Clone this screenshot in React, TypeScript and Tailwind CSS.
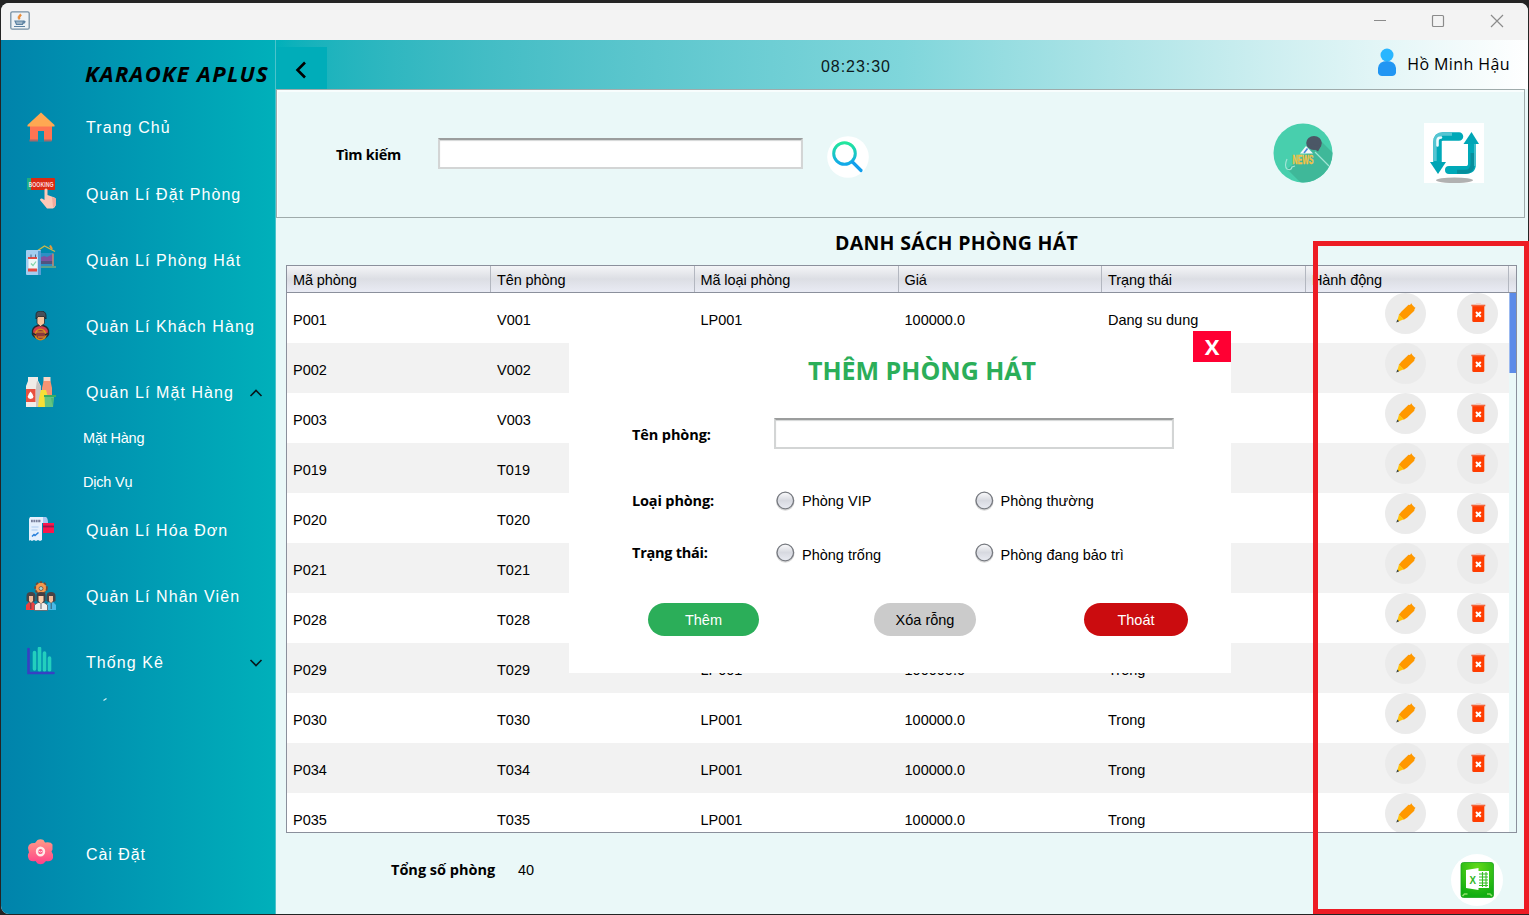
import React from "react";

const ARIAL = "font-['Liberation_Sans',Arial,sans-serif]";
const HUMAN = "font-['Open_Sans','Noto_Sans',sans-serif]";

function HomeIcon() {
  return (
    <svg width="30" height="30" viewBox="0 0 30 30">
      <path d="M4 13.500h22v15H4z" fill="#ff7452" />
      <path d="M3.500 27.500h22V29.500h-22z" fill="#a5696b" />
      <path d="M12 19h6v11h-6z" fill="#0593b3" />
      <path d="M15 0.500 28.500 13v1.500h-27V13z" fill="#ffa852" />
    </svg>
  );
}

function BookingIcon() {
  return (
    <svg width="30" height="30" viewBox="0 0 30 30" className="overflow-visible">
      <rect x="1" y="-1" width="28" height="12" rx="1" fill="#d92b13" />
      <rect x="1" y="-1" width="4" height="12" fill="#1fae83" />
      <text x="2.500" y="7.500" fontSize="6.500" fontWeight="700" fill="#fbd9de" textLength="25" lengthAdjust="spacingAndGlyphs" fontFamily="Liberation Sans">BOOKING</text>
      <path d="M18.500 10.500q1.500-2 3 0V16l7 2.500q1.500.5 1.500 2.500l-1 7-2 1.500h-6L14 21q0-2 2-1.500l2.500 1.500z" fill="#fdc9b8" />
      <path d="M26 18l4 1.500v7l-3 2z" fill="#f2ab9d" />
    </svg>
  );
}

function KaraokeRoomIcon() {
  return (
    <svg width="30" height="30" viewBox="0 0 30 30">
      <path d="M11 6 18.500 1 29 6.500" stroke="#c9b94a" strokeWidth="1.400" fill="none" />
      <path d="M24 0.500l2 3.500" stroke="#e89a3a" strokeWidth="2" />
      <path d="M13 8h14v14H13z" fill="#2d8fc4" />
      <path d="M13 13l5-2 3 1 6-3v10H13z" fill="#7e53a0" />
      <path d="M13 16h14v3H13z" fill="#51537f" />
      <path d="M27 8.500v13" stroke="#c98a71" strokeWidth="1.500" />
      <path d="M13 22h17" stroke="#5da28a" strokeWidth="2" />
      <rect x="0" y="5" width="15" height="25" rx="1" fill="#a3cdf0" />
      <path d="M12 6h3v24h-3z" fill="#589ed5" />
      <path d="M2.500 12h9v12h-9z" fill="#eef7f8" />
      <path d="M2 12h9v2H2zM2 23.500h9v3H2z" fill="#e54a42" />
      <path d="M5 9.500v3M9.500 9.500v3" stroke="#4c6686" strokeWidth="1" />
      <path d="M5 18.500l2 2 3-4" stroke="#7ed3a9" strokeWidth="1.200" fill="none" />
    </svg>
  );
}

function CustomerIcon() {
  return (
    <svg width="30" height="30" viewBox="0 0 30 30">
      <path d="M6.500 19.500q1-4.500 8-5.500 7 1 8 5.500v4q-3 4-8 5-5-1-8-5z" fill="#d13c4b" stroke="#222b31" strokeWidth="1.300" />
      <path d="M11 4h7.500v8.500l-4 3-3.500-3z" fill="#f5c49d" stroke="#222b31" strokeWidth=".8" />
      <path d="M10 8V4q0-4 4.700-4T20 4v4l-2-2.500h-6z" fill="#47505a" stroke="#1c252b" strokeWidth=".8" />
      <circle cx="14.500" cy="23.500" r="5.300" fill="#8c3a3c" stroke="#d38c1c" strokeWidth="1.600" />
      <path d="M10 21h9M12 26h6" stroke="#e89a2b" strokeWidth="1.200" />
      <path d="M6 22l4 2M23 22l-4 2" stroke="#222b31" strokeWidth="1.500" />
    </svg>
  );
}

function GoodsIcon() {
  return (
    <svg width="30" height="30" viewBox="0 0 30 30">
      <path d="M2 0h10v3.500l3 6V30H0V9l2-5z" fill="#f0ece8" />
      <path d="M11 3.500l4 6V30h-5V10z" fill="#c9c4c2" />
      <path d="M0 12h9.500v13H0z" fill="#e8503f" />
      <path d="M4.500 14.500q6 6.500 0 7.500-5.500-1 0-7.500z" fill="#fff" />
      <path d="M17.500 0h7v4.500h-7z" fill="#f9d7c6" />
      <path d="M17.500 4h7l1.500 7v9H16v-9z" fill="#f49472" />
      <path d="M15 13h5l2 7-1 10h-9l1-9z" fill="#f6e036" />
      <path d="M18.500 20H28l-1 10h-8z" fill="#65c480" />
      <path d="M18 18h12v2H18z" fill="#38ad62" />
      <path d="M25 21h2.500l-1 8z" fill="#4bb876" />
    </svg>
  );
}

function BillIcon() {
  return (
    <svg width="30" height="30" viewBox="0 0 30 30">
      <path d="M4 2h15q2 1 2 6h-5v17l-2 1-2-1-2 1-2-1-2 1-2-1-1 1V4z" fill="#e4effd" />
      <path d="M17 2h3q2 1 2 6h-5z" fill="#a8c8f2" />
      <path d="M5 6h10" stroke="#787f9b" strokeWidth="2.500" strokeDasharray="1.800 .6" />
      <path d="M5.500 12h7M5.500 15h6" stroke="#bdd7f5" strokeWidth="1.600" />
      <path d="M6 21.500l2-2 1 1 3.500-3" stroke="#277fdc" strokeWidth="1.500" fill="none" />
      <rect x="17" y="8" width="11" height="10" fill="#fb174b" />
      <path d="M17 11.500h11" stroke="#94194c" strokeWidth="1.800" />
    </svg>
  );
}

function StaffIcon() {
  return (
    <svg width="30" height="30" viewBox="0 0 30 30">
      <circle cx="15" cy="7" r="5.500" fill="#ef9143" stroke="#704c39" strokeWidth="2.500" strokeDasharray="2.500 1.500" />
      <circle cx="15" cy="7" r="5" fill="#f6994c" />
      <circle cx="15" cy="7.500" r="2" fill="#a9d8d2" stroke="#694e47" strokeWidth=".8" />
      <path d="M0 29v-5l3-3h4l3 3v5z" fill="#ed4040" />
      <path d="M20 29v-5l3-3h4l3 3v5z" fill="#4bb9e6" />
      <path d="M.5 20v-5q0-4 4.500-4t4.500 4v5l-4.500 2zM20.500 20v-5q0-4 4.500-4t4.500 4v5l-4.500 2z" fill="#484447" />
      <path d="M3 15h4v5l-2 2-2-2zM23 15h4v5l-2 2-2-2z" fill="#f5bd99" />
      <path d="M8.500 29.500V24l3.500-2.500h6l3.500 2.500v5.500z" fill="#f2efed" stroke="#5c5c61" strokeWidth=".8" />
      <path d="M10.500 14q0-3 4.500-3t4.500 3v6l-4.500 3-4.500-3z" fill="#453f43" />
      <path d="M12.500 15h5v5L15 23l-2.500-3z" fill="#ffd0ab" />
      <path d="M15 23v5M4.800 22v6M25.200 22v6" stroke="#37424e" strokeWidth=".8" />
    </svg>
  );
}

function StatsIcon() {
  return (
    <svg width="30" height="30" viewBox="0 0 30 30">
      <path d="M8.500 5.500V22M13.500 1.500V23M18.500 6v17M23.500 11v12" stroke="#23cfbd" strokeWidth="3.600" strokeLinecap="round" />
      <path d="M2.500 2v24h25" stroke="#3740c3" strokeWidth="2.600" fill="none" strokeLinecap="round" />
    </svg>
  );
}

function SettingsIcon() {
  return (
    <svg width="30" height="30" viewBox="0 0 30 30">
      <defs>
        <linearGradient id="gear" x1="0" y1="0" x2="0" y2="1">
          <stop offset="0" stopColor="#ff9c86" />
          <stop offset="1" stopColor="#ff4189" />
        </linearGradient>
      </defs>
      <path d="M11.500 1q3-1.500 6 0l1.500 2.500q6-1 7.500 2v5l-1 2 1.500 3v3.500q-1.500 4-7 3L17.500 24.500q-3 1.500-6 0L9.500 22q-6 1-7-2.500-1.500-3.500.5-6L2 9q.5-5.500 7-5z" fill="url(#gear)" />
      <ellipse cx="14.500" cy="12.500" rx="3.500" ry="3.800" fill="#ff5a86" stroke="#ffe9e8" strokeWidth="2.400" />
      <path d="M12.500 12q2 2 4 0" stroke="#ffdadd" strokeWidth="1" fill="none" />
    </svg>
  );
}

function Chevron({ up }: { up?: boolean }) {
  return (
    <svg width="14" height="8" viewBox="0 0 14 8" className="ml-auto mr-[12.5px] mt-[2px]">
      <path d={up ? "M1.500 7 7 1.500 12.500 7" : "M1.500 1 7 6.500 12.500 1"} fill="none" stroke="#07181b" strokeWidth="1.600" />
    </svg>
  );
}

function NavItem({ icon, label, chevron, tracking = "tracking-[1.08px]" }: { icon: React.ReactNode; label: string; chevron?: "up" | "down"; tracking?: string }) {
  return (
    <div className="flex h-[66px] shrink-0 items-center pl-[25px] text-white">
      {icon}
      <span className={`ml-[30px] whitespace-nowrap pt-[2px] text-[16px] ${tracking}`}>{label}</span>
      {chevron && <Chevron up={chevron === "up"} />}
    </div>
  );
}

function Sidebar() {
  return (
    <aside className="flex w-[275px] shrink-0 flex-col border-r border-[#4cc3cb] bg-linear-to-r from-[#0083ab] to-[#00b0ba]">
      <h1 className={`${HUMAN} mt-[17px] flex h-8 shrink-0 items-center whitespace-nowrap pl-[84px] text-[22px] font-bold italic tracking-[1.3px] text-black`}>KARAOKE APLUS</h1>
      <nav className="flex flex-col pt-[5px]">
        <NavItem icon={<HomeIcon />} label="Trang Chủ" />
        <div className="flex flex-col pt-px">
          <NavItem icon={<BookingIcon />} label="Quản Lí Đặt Phòng" />
          <NavItem icon={<KaraokeRoomIcon />} label="Quản Lí Phòng Hát" />
          <NavItem icon={<CustomerIcon />} label="Quản Lí Khách Hàng" />
          <NavItem icon={<GoodsIcon />} label="Quản Lí Mặt Hàng" chevron="up" />
        </div>
        <div className="flex h-[72px] flex-col gap-[18px] pl-[82px] text-[14.5px] tracking-[-0.2px] text-white">
          <span className="flex h-[26px] items-center pt-px">Mặt Hàng</span>
          <span className="flex h-[26px] items-center pt-px">Dịch Vụ</span>
        </div>
        <NavItem icon={<BillIcon />} label="Quản Lí Hóa Đơn" />
        <NavItem icon={<StaffIcon />} label="Quản Lí Nhân Viên" />
        <NavItem icon={<StatsIcon />} label="Thống Kê" chevron="down" />
      </nav>
      <svg width="4" height="3" viewBox="0 0 4 3" className="ml-[102px] mt-[3px] shrink-0">
        <path d="M.5 2.500 3.500.5" stroke="#d5f0f4" strokeWidth="1.200" />
      </svg>
      <div className="mt-auto mb-[27px]">
        <NavItem icon={<SettingsIcon />} label="Cài Đặt" tracking="tracking-[0.95px]" />
      </div>
    </aside>
  );
}

function TitleBar() {
  return (
    <div className="flex h-[37px] shrink-0 items-center bg-[#f3f3f3] pl-[9px]">
      <svg width="20" height="19" viewBox="0 0 20 19" className="-mt-[3px]">
        <rect x=".8" y=".8" width="18.400" height="17.400" rx="1.500" fill="#eef2f5" stroke="#7690a4" strokeWidth="1.300" />
        <path d="M10.500 3q-4 3-1.500 5.500Q11 7 9.500 6q3-1 1-3z" fill="#e98a35" stroke="#e98a35" strokeWidth=".8" />
        <path d="M5 10h8.500l-1 3.500H6.500zM13.500 10.500q3-.5 0 2M4 15.500h11" stroke="#5c82a2" strokeWidth="1.200" fill="#9db4c6" />
      </svg>
      <svg width="134" height="14" viewBox="0 0 134 14" className="-mt-px ml-auto mr-[23px]" fill="none" stroke="#8b8b8b" strokeWidth="1.200">
        <path d="M3 6.500h12" />
        <rect x="61.500" y="1.500" width="11" height="11" rx="1" />
        <path d="M120 1l12 12M132 1l-12 12" />
      </svg>
    </div>
  );
}

function TopBar() {
  return (
    <header className="flex h-[49px] items-center bg-linear-to-r from-[#00b0ba] via-[#7fd6db] to-white">
      <div className="mt-auto flex h-[42px] w-[51px] items-center bg-[#00adb9] pl-[18px] pt-[3px]">
        <svg width="14" height="18" viewBox="0 0 14 18">
          <path d="M11 1.500 3.500 9l7.500 7.500" fill="none" stroke="#000" strokeWidth="2.600" />
        </svg>
      </div>
      <div className="flex-1 pl-[494px] pt-[4px] text-[16px] tracking-[0.95px] text-[#0c1a1c]">08:23:30</div>
      <svg width="20" height="28" viewBox="0 0 20 28" className="mb-[5px]">
        <path d="M1 20q1-7 9-7t9 7v5q-1 3-4 3H5q-3 0-4-3z" fill="#2196f3" />
        <circle cx="10" cy="7" r="6.500" fill="#29b6ff" />
      </svg>
      <span className={`${HUMAN} mb-px ml-[10px] mr-[17.5px] whitespace-nowrap text-[16px] font-normal tracking-[0.4px] text-black`}>Hồ Minh Hậu</span>
    </header>
  );
}

function TextField({ className }: { className: string }) {
  return (
    <div className={`border-2 border-[#d3d5d5] border-t-[#9b9d9d] bg-white shadow-[inset_0_1px_1px_#d4d6d6] ${className}`} />
  );
}

function SearchPanel() {
  return (
    <section className="mr-[3px] flex h-[129px] border border-[#9fabab] bg-[#eaf8f8] shadow-[inset_1px_2px_0_#f8fdfd]">
      <span className={`${HUMAN} ml-[59px] mt-[53px] h-6 w-[102px] text-[14.500px] font-bold leading-6 tracking-[-0.25px] text-black`}>Tìm kiếm</span>
      <TextField className="mt-[48px] h-[31px] w-[365px]" />
      <svg width="42" height="42" viewBox="0 0 42 42" className="ml-[24px] mt-[46px]">
        <defs>
          <linearGradient id="lens" x1="0" y1="0" x2="0" y2="1">
            <stop offset="0" stopColor="#22e79c" />
            <stop offset="1" stopColor="#12a9ea" />
          </linearGradient>
        </defs>
        <circle cx="21" cy="21" r="20.800" fill="#fff" />
        <circle cx="17.500" cy="17.500" r="10.800" fill="none" stroke="url(#lens)" strokeWidth="3" />
        <path d="M25.500 26l8.500 8.500" stroke="#129fec" strokeWidth="3.200" strokeLinecap="round" />
      </svg>
      <svg width="60" height="60" viewBox="0 0 60 60" className="ml-auto mt-[33px]">
        <defs>
          <clipPath id="disc"><circle cx="30" cy="30" r="29.500" /></clipPath>
        </defs>
        <circle cx="30" cy="30" r="29.500" fill="#48cfad" />
        <g clipPath="url(#disc)">
          <path d="M48 18l14 14v28H28L14 46l8-6z" fill="#3fb899" />
          <path d="M27 30.500l6-7.500 7 7.500z" fill="#f5f7fa" />
          <path d="M31 30l3.500-4.500" stroke="#4a89dc" strokeWidth="1.600" />
          <ellipse cx="41" cy="20" rx="7.800" ry="7" fill="#4b5766" />
          <path d="M34 21l11 7.500 3-5.500z" fill="#4b5766" />
          <path d="M42 29l14 14M14 36q-3 7 0 10 4 2 5-2l3-1" stroke="#a1e5d5" strokeWidth="1.200" fill="none" />
          <text x="19.500" y="40.500" fontFamily="Liberation Sans" fontWeight="700" fontSize="12.500" fill="#f6c143" stroke="#f6c143" strokeWidth=".4" textLength="21" lengthAdjust="spacingAndGlyphs">NEWS</text>
        </g>
      </svg>
      <svg width="60" height="60" viewBox="0 0 60 60" className="ml-[91px] mr-[40px] mt-[33px]">
        <path d="M0 0h60v60H0z" fill="#fff" />
        <ellipse cx="30.500" cy="57.300" rx="18.500" ry="2.800" fill="#b1b1b1" />
        <path d="M35 13.500H19q-5.500 0-5.500 5.500V40" fill="none" stroke="#00a9b8" strokeWidth="8.500" strokeLinecap="round" />
        <path d="M28 11H19q-8 0-8 8V38" fill="none" stroke="#55c5d2" strokeWidth="3.400" />
        <path d="M13.500 22.500v-5q0-3 3.500-3" fill="none" stroke="#effcff" strokeWidth="2.600" strokeLinecap="round" />
        <path d="M6 39h16L14 51z" fill="#00a5b5" />
        <path d="M25 47h16q7 0 7-6.500V19" fill="none" stroke="#00a9b8" strokeWidth="8" strokeLinecap="round" />
        <path d="M33 48.800h8q7.500 0 7.500-8V30" fill="none" stroke="#078e9c" strokeWidth="4" />
        <path d="M51 20v23" stroke="#4bc3cf" strokeWidth="1.800" />
        <path d="M39.500 21l8-12L55 21z" fill="#00a5b5" />
      </svg>
    </section>
  );
}

function EditButton() {
  return (
    <svg width="41" height="41" viewBox="0 0 41 41">
      <circle cx="20.500" cy="20.500" r="20.500" fill="#ebebeb" />
      <path d="M13.800 21.700L16.500 18.500 23.500 11.800l1.500.2 1.300-1.800 1 1.800 2.200 2.200 1 .6-1 1.400-.2 1.600-7 6.700-3.500 2.200z" fill="#ff9800" />
      <path d="M14 21.500l4.800 4.700-7 3z" fill="#ffc20e" />
      <path d="M12.300 26.400l1.900 1.900-2.900 1.200z" fill="#37474f" />
    </svg>
  );
}

function DeleteButton() {
  return (
    <svg width="41" height="41" viewBox="0 0 41 41">
      <circle cx="20.500" cy="20.500" r="20.500" fill="#ebebeb" />
      <path d="M15.300 12.500h12V27.800q0 1.200-1.200 1.200h-9.600q-1.200 0-1.200-1.200z" fill="#ff3d00" />
      <path d="M14.300 12.500h14" stroke="#f5663c" strokeWidth="1.600" />
      <path d="M19 11h5" stroke="#f3c9bd" strokeWidth="1.400" />
      <path d="M19 19l4.800 4.800M23.800 19l-4.800 4.800" stroke="#fff" strokeWidth="2" />
    </svg>
  );
}

const COLUMNS = ["Mã phòng", "Tên phòng", "Mã loại phòng", "Giá", "Trạng thái", "Hành động"];

const ROOMS = [
  ["P001", "V001", "LP001", "100000.0", "Dang su dung"],
  ["P002", "V002", "LP001", "100000.0", "Trong"],
  ["P003", "V003", "LP001", "100000.0", "Trong"],
  ["P019", "T019", "LP001", "100000.0", "Trong"],
  ["P020", "T020", "LP001", "100000.0", "Trong"],
  ["P021", "T021", "LP001", "100000.0", "Trong"],
  ["P028", "T028", "LP001", "100000.0", "Trong"],
  ["P029", "T029", "LP001", "100000.0", "Trong"],
  ["P030", "T030", "LP001", "100000.0", "Trong"],
  ["P034", "T034", "LP001", "100000.0", "Trong"],
  ["P035", "T035", "LP001", "100000.0", "Trong"],
];

const GRID = "grid grid-cols-[204px_203.5px_204px_203.5px_204px_1fr]";

function RoomTable() {
  return (
    <div className="ml-[10px] flex h-[568px] w-[1231px] flex-col overflow-hidden border border-[#8b909c] bg-white text-[14.5px] text-black">
      <div className="flex h-[27px] shrink-0 border-b border-[#8b909c] bg-linear-to-b from-[#f4f5f7] via-[#dcdee4] via-50% to-[#e9ebf4]">
        <div className={`${GRID} w-[1222px] tracking-[-0.1px]`}>
          {COLUMNS.map((name) => (
            <div key={name} className="flex items-center whitespace-nowrap border-r border-[#b3b7c0] pl-[6px] pt-[3px]">{name}</div>
          ))}
        </div>
      </div>
      <div className="flex min-h-0 flex-1">
        <div className="w-[1222px]">
          {ROOMS.map((room) => (
            <div key={room[0]} className={`${GRID} h-[50px] odd:bg-white even:bg-[#f2f2f2]`}>
              {room.map((cell, i) => (
                <div key={i} className="flex items-center whitespace-nowrap pl-[6px] pt-[6px]">{cell}</div>
              ))}
              <div className="flex items-start gap-[31px] pl-[79px]">
                <EditButton />
                <DeleteButton />
              </div>
            </div>
          ))}
        </div>
        <div className="flex-1 bg-[#eaf8f8]">
          <div className="h-[80px] border-l border-[#9bbaf0] bg-[#5c8ce8]" />
        </div>
      </div>
    </div>
  );
}

function Radio({ label, offset = "pt-px" }: { label: string; offset?: string }) {
  return (
    <span className="flex items-center whitespace-nowrap text-[14.5px]">
      <svg width="19" height="20" viewBox="0 0 19 20" className="mr-[7px] shrink-0">
        <defs>
          <linearGradient id="knob" x1="0" y1="0" x2="0" y2="1">
            <stop offset="0" stopColor="#fbfbfc" />
            <stop offset=".5" stopColor="#d7d9e0" />
            <stop offset="1" stopColor="#e9ebf2" />
          </linearGradient>
        </defs>
        <circle cx="9.300" cy="10.500" r="8.500" fill="none" stroke="#dadada" strokeWidth="1.500" />
        <circle cx="9.300" cy="9.500" r="8.300" fill="url(#knob)" stroke="#777a80" strokeWidth="1.300" />
      </svg>
      <span className={offset}>{label}</span>
    </span>
  );
}

function AddRoomDialog() {
  return (
    <div className="absolute left-[569px] top-[331px] flex h-[342px] w-[662px] flex-col bg-white text-black">
      <div className={`${HUMAN} flex h-[31px] justify-end`}>
        <button className="flex h-[31px] w-[38px] items-center justify-center bg-[#ff0033] text-[22px] font-bold text-white">X</button>
      </div>
      <h2 className={`${HUMAN} -mt-[10px] h-[36px] pl-[44px] text-center text-[25px] font-bold leading-[36px] text-[#2bae59]`}>THÊM PHÒNG HÁT</h2>
      <div className="mt-[30px] flex pl-[63px]">
        <span className={`${HUMAN} w-[142px] pt-[5px] text-[14.500px] font-bold leading-6 tracking-[-0.1px]`}>Tên phòng:</span>
        <TextField className="h-[31px] w-[400px]" />
      </div>
      <div className="mt-[40px] grid h-[22px] grid-cols-[144px_198.5px_1fr] items-center pl-[63px]">
        <span className={`${HUMAN} text-[14.500px] font-bold leading-6 tracking-[-0.15px]`}>Loại phòng:</span>
        <Radio label="Phòng VIP" />
        <Radio label="Phòng thường" />
      </div>
      <div className="mt-[29px] grid h-[24px] grid-cols-[144px_198.5px_1fr] items-center pl-[63px]">
        <span className={`${HUMAN} text-[14.500px] font-bold leading-6 tracking-[-0.25px]`}>Trạng thái:</span>
        <Radio label="Phòng trống" offset="pt-[5px]" />
        <Radio label="Phòng đang bảo trì" offset="pt-[5px]" />
      </div>
      <div className="mt-[39px] flex pl-[79px] text-[14.5px]">
        <button className="h-[33px] w-[111px] rounded-[17px] bg-[#2bae59] pt-[3px] text-white">Thêm</button>
        <button className="ml-[115px] h-[33px] w-[102px] rounded-[17px] bg-[#cbcbcb] pt-[3px]">Xóa rỗng</button>
        <button className="ml-[108px] h-[33px] w-[104px] rounded-[17px] bg-[#cb0c0f] pt-[3px] text-white">Thoát</button>
      </div>
    </div>
  );
}

function ExcelIcon() {
  return (
    <svg width="52" height="52" viewBox="0 0 52 52" className="ml-auto mr-[25px] mt-[21px]">
      <defs>
        <radialGradient id="excel" cx=".5" cy=".15" r=".8">
          <stop offset="0" stopColor="#62d91a" />
          <stop offset="1" stopColor="#12ae12" />
        </radialGradient>
      </defs>
      <circle cx="26" cy="26" r="26" fill="#fff" />
      <rect x="10" y="8.500" width="32.500" height="35" rx="2.500" fill="url(#excel)" stroke="#1aa51d" strokeWidth=".8" />
      <path d="M26 17h12v17H26z" fill="#fff" />
      <path d="M28 20h9M28 23h9M28 26h9M28 29h9M28 31.500h9M31.500 18v15M35 18v15" stroke="#35bc25" strokeWidth="1.100" />
      <path d="M15 16l12.500-2v22L15 34z" fill="#fff" />
      <text x="18.500" y="30" fontFamily="Liberation Sans" fontWeight="700" fontSize="11.500" textLength="6.500" lengthAdjust="spacingAndGlyphs" fill="#30b722">X</text>
      <path d="M11.500 42l2-2h3M41 42l-2-2h-3" stroke="#8ee06a" strokeWidth="1.600" fill="none" />
    </svg>
  );
}

export default function App() {
  return (
    <div className={`${ARIAL} relative h-[915px] w-[1529px] overflow-hidden bg-[#242424] pl-px pt-[3px]`}>
      <div className="flex h-[911px] w-[1526.5px] flex-col overflow-hidden rounded-[8px] bg-[#eaf8f8]">
        <TitleBar />
        <div className="flex min-h-0 flex-1">
          <Sidebar />
          <main className="flex min-w-0 flex-1 flex-col">
            <TopBar />
            <SearchPanel />
            <h2 className={`${HUMAN} flex h-[47px] items-center pl-[559px] pt-[3px] text-[19.5px] font-bold tracking-[0.28px] text-black`}>DANH SÁCH PHÒNG HÁT</h2>
            <RoomTable />
            <footer className="flex">
              <span className={`${HUMAN} ml-[115px] mt-[25px] w-[127px] whitespace-nowrap text-[14.500px] font-bold leading-6`}>Tổng số phòng</span>
              <span className="mt-[25px] text-[14.5px] leading-6">40</span>
              <ExcelIcon />
            </footer>
          </main>
        </div>
      </div>
      <AddRoomDialog />
      <div className="absolute left-[1313px] top-[241px] h-[673px] w-[216px] border-[5px] border-[#ed1c24]" />
    </div>
  );
}
